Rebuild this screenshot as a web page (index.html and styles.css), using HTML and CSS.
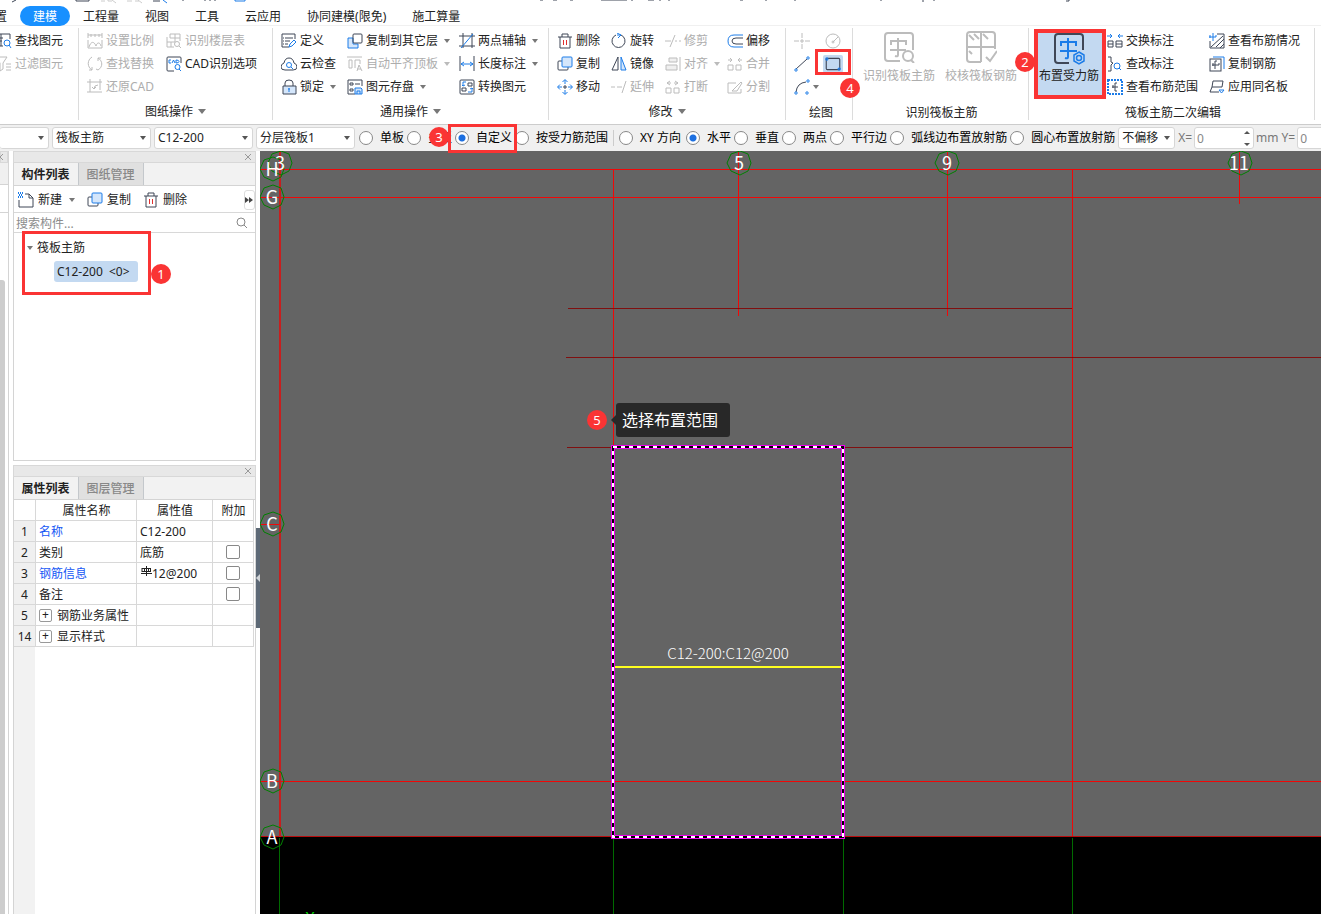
FILE: index.html
```html
<!DOCTYPE html>
<html lang="zh-CN">
<head>
<meta charset="utf-8">
<title>建模</title>
<link rel="stylesheet" href="styles.css">
</head>
<body>
<svg class="defs" aria-hidden="true">
  <symbol id="find" viewBox="0 0 16 16"><path d="M1 5V1h13v5M1 5h6M1 8h5M1 13h6M1 8v5M5 1v12"/><g class="a"><circle cx="11" cy="10" r="3"/><path d="M13 12l2 3"/></g></symbol>
  <symbol id="filter" viewBox="0 0 16 16"><path d="M0 1h11L7 7v6l-3 2V7zM10 8h5M10 11h5M10 14h5"/></symbol>
  <symbol id="scale" viewBox="0 0 16 16"><path d="M1 0v5M15 0v5M1 2h14M4 1v3M8 1v3M12 1v3M1 7v8h14V7M2 14c2-6 5-6 7-1 1-4 4-4 5 0"/></symbol>
  <symbol id="floor" viewBox="0 0 16 16"><path d="M4 1h10v7M1 4v10h7M4 1v4h5v4M1 9h8M9 1v4h5M5 9v5"/><circle cx="11" cy="11" r="2.5"/><path d="M13 13l2 2"/></symbol>
  <symbol id="replace" viewBox="0 0 16 16"><path d="M5 1C0 4 0 11 5 14M5 14v-3M5 14H2M11 14c5-3 5-9 0-12M11 2v3M11 2h3M9 13l2 1"/></symbol>
  <symbol id="cad" viewBox="0 0 16 16"><path d="M8 15H2q-1 0-1-1V2q0-1 1-1h12q1 0 1 1v5"/><g class="a"><path d="M5 4H3v3h2M6 7l1.500-3L9 7M10 4v3q3 0 3-1.500T10 4"/><circle cx="11.500" cy="11" r="2.500"/><path d="M13 13l2 2"/></g></symbol>
  <symbol id="restore" viewBox="0 0 16 16"><path d="M0 3h15M3 0v13h12M13 3v8M0 13h3M13 0v3M11 6q-4 0-4 4M5 8l2 2 2-2"/></symbol>
  <symbol id="define" viewBox="0 0 16 16"><path d="M8 14H1V1h13v5M4 5h8M4 8h5M4 11h3M2 5h1M2 8h1M2 11h1"/><path class="a" d="M8 14l1-3 4-4 2 2-4 4z"/></symbol>
  <symbol id="cloud" viewBox="0 0 16 16"><path d="M4 14q-4 0-4-3t3-4q1-5 5-5t5 5q3 1 3 4t-4 3z"/><g class="a"><circle cx="8" cy="9" r="2.500"/><path d="M10 11l2 2"/></g></symbol>
  <symbol id="lock" viewBox="0 0 16 16"><path d="M4 7V4q0-3 4-3t4 3v3"/><path class="f" d="M2 7h13v8H2z"/><path class="a" d="M8 9v4M7 10h2"/></symbol>
  <symbol id="copy" viewBox="0 0 16 16"><path d="M5 5H2q-1 0-1 1v7q0 1 1 1h8q1 0 1-1v-2"/><rect class="a f" x="5" y="1" width="10" height="10" rx="1"/></symbol>
  <symbol id="copyto" viewBox="0 0 16 16"><path class="a f" d="M1 5h5v6h5v4H1z"/><rect x="6" y="1" width="9" height="9" rx="1"/></symbol>
  <symbol id="align" viewBox="0 0 16 16"><path d="M0 1h15M2 4h3v8H2zM8 12V4h5v4M10 15l2-6 3 6M10 13h4"/></symbol>
  <symbol id="save" viewBox="0 0 16 16"><path d="M8 15H1V1h14v6M3 4h3v2H3zM8 5h5M3 10h3v2H3z"/><path class="a f" d="M8 9h6l1 1v5H8zM10 15v-3h3v3"/></symbol>
  <symbol id="axis" viewBox="0 0 16 16"><path d="M4 0v15M13 0v15M0 3h16M0 13h16"/><path class="a" d="M2 15L14 1"/></symbol>
  <symbol id="length" viewBox="0 0 16 16"><path d="M1 0v15M15 0v15"/><path class="a" d="M2 8h12M5 6L2 8l3 2M11 6l3 2-3 2"/></symbol>
  <symbol id="convert" viewBox="0 0 16 16"><rect x="1" y="1" width="14" height="14" rx="1"/><path d="M9 4h4v3H9zM3 9h4v3H3z"/><path class="a" d="M7 3H4v4M3 6l1 1 2-1M9 13h4V9M11 10l2-1 1 1"/></symbol>
  <symbol id="trash" viewBox="0 0 16 16"><path d="M1 4h14M5 4V1h6v3M3 4v11h10V4"/><path class="r" d="M6.500 7v5M9.500 7v5"/></symbol>
  <symbol id="rotate" viewBox="0 0 16 16"><path d="M10 2a6.500 6.500 0 1 1-5 0"/><path class="a" d="M6 0l4 2-3 3M10 2H6"/></symbol>
  <symbol id="mirror" viewBox="0 0 16 16"><path d="M7 1v13H1z"/><path class="a f" d="M10 1v13h5z"/></symbol>
  <symbol id="move" viewBox="0 0 16 16"><g class="a"><path d="M5.500 3L8 0.500 10.500 3M5.500 13L8 15.500 10.500 13M3 5.500L0.500 8 3 10.500M13 5.500L15.500 8 13 10.500M1 8h4M11 8h4M8 1v4M8 11v4"/></g><path d="M6 8h4M8 6v4"/></symbol>
  <symbol id="trim" viewBox="0 0 16 16"><path d="M0 8h6M10 2L5 14M10 8h2M14 8h2"/></symbol>
  <symbol id="extend" viewBox="0 0 16 16"><path d="M0 8h4M6 8h5M15 2l-4 12"/></symbol>
  <symbol id="alignr" viewBox="0 0 16 16"><path d="M15 1v14"/><path class="f" d="M4 2h8v4H4zM1 9h11v5H1z"/></symbol>
  <symbol id="break" viewBox="0 0 16 16"><path d="M1 9h5v5H1zM9 9h5v5H9zM5 2L2 4l3 2M2 4h4M10 2l3 2-3 2M13 4H9"/></symbol>
  <symbol id="offset" viewBox="0 0 16 16"><path class="a" d="M16 2H7q-6 0-6 6t6 6h9"/><path d="M16 5H9q-4 0-4 3t4 3h7"/></symbol>
  <symbol id="merge" viewBox="0 0 16 16"><path d="M1 9h5v5H1zM9 9h5v5H9zM1 4h4M3 2l2 2-2 2M15 4h-4M13 2l-2 2 2 2"/></symbol>
  <symbol id="split" viewBox="0 0 16 16"><path d="M9 4H1v10h13v-4M5 12l9-9 1 1-5 8z"/></symbol>
  <symbol id="point" viewBox="0 0 16 16"><path d="M0 8h5M11 8h5M8 0v5M8 11v5M7 7h2v2H7z"/></symbol>
  <symbol id="circle" viewBox="0 0 16 16"><circle cx="8" cy="8" r="7"/><path d="M8 9l5-5"/><circle cx="8" cy="9" r="1"/></symbol>
  <symbol id="line" viewBox="0 0 16 16"><path d="M2 13L13 3"/><g class="a"><circle cx="2" cy="14" r="1.200"/><circle cx="14" cy="2" r="1.200"/></g></symbol>
  <symbol id="rect" viewBox="0 0 16 16"><rect x="2" y="3" width="12" height="10" rx="1"/><g class="a"><circle cx="2.500" cy="3.500" r="1"/><circle cx="13.500" cy="12.500" r="1"/></g></symbol>
  <symbol id="arc" viewBox="0 0 16 16"><path d="M2 13Q3 4 12 3"/><g class="a"><circle cx="2" cy="14" r="1.200"/><circle cx="14" cy="2" r="1.200"/><circle cx="13" cy="14" r="1.200"/></g></symbol>
  <symbol id="swap" viewBox="0 0 16 16"><path d="M1 8h5v6H1zM9 8h6v6H9zM1 11h5M9 11h6"/><path class="a" d="M0 3h5M3 1l2 2-2 2M16 3h-5M13 1l-2 2 2 2"/></symbol>
  <symbol id="edit" viewBox="0 0 16 16"><path d="M1 1h3v5l2 1-2 2v6H1"/><g class="a"><circle cx="10" cy="10" r="3"/><path d="M12 12l2 2"/></g></symbol>
  <symbol id="range" viewBox="0 0 16 16"><rect class="a" x="1" y="1" width="14" height="14" stroke-width="2" stroke-dasharray="2 1"/><path d="M10 4H8v8h2M5 8h6M6 6v3"/></symbol>
  <symbol id="status" viewBox="0 0 16 16"><path d="M8 1h7v14H1V8M2 14L14 3M7 14l8-8M11 15l4-4"/><path class="a" d="M4 0v8M0 4h7V2M1 2v3"/></symbol>
  <symbol id="copybar" viewBox="0 0 16 16"><path class="a" d="M4 1h11v12"/><rect x="1" y="3" width="11" height="12"/><path d="M8 5H6v8M3 9h7V7M4 7v3"/></symbol>
  <symbol id="apply" viewBox="0 0 16 16"><path d="M4 2h10l-1 6H3zM3 8l-2 5h9"/><path class="a" d="M10 11h5l-2.500 3z"/></symbol>
  <symbol id="new" viewBox="0 0 16 16"><path d="M7 2h4l4 4v9H1V8M11 2v4h4"/><path class="a" d="M0 1h5M1 3h4M0 5h5" stroke-dasharray="1 1" stroke-width="2"/></symbol>
  <symbol id="bigfind" viewBox="0 0 32 32"><path d="M17 30H5q-3 0-3-3V5q0-3 3-3h22q3 0 3 3v14M15 7v17q0 2-3 1M8 14v-4h15v4M7 19h16"/><circle cx="25" cy="25" r="5"/><path d="M28 29l3 3"/></symbol>
  <symbol id="bigcheck" viewBox="0 0 32 32"><path d="M16 31H5q-3 0-3-3V4q0-3 3-3h22q3 0 3 3v14M16 1v30M2 16h28M4 4l5 5M9 3l5 5M18 3l5 5M4 20l3 3M21 26l4 4 7-10"/></symbol>
  <symbol id="bigbar" viewBox="0 0 32 32"><path d="M16 30H5q-3 0-3-3V4q0-3 3-3h22q3 0 3 3v13"/><g class="a"><path d="M15 5v19q0 2-3 1M8 13V9h15v4M7 18h17"/><g stroke-width="1.500"><path d="M26 19l5 3v6l-5 3-5-3v-6z"/><circle cx="26" cy="25" r="2.500"/></g></g></symbol>
</svg>

<header class="top">
  <svg class="titlebar" aria-hidden="true"><path d="M12 2l4-2M76 0v1h13V0M183 0v1" /><path class="dim" d="M101 1h4M108 0v1h4M112 0l4 3M127 1h5M135 1h4M138 0l4 3"/><path d="M153 1h7M205 0v1M210 0v1M215 0v1"/><path class="a" d="M163 0l4 3M235 0v1h10V0"/><path d="M540 0h3M553 0h4M570 0h3M601 0h26M632 0v1M648 0h6M660 0v1M669 0v1M740 0h3M766 0v1M795 0v1M880 0h2M923 0v2M934 0v1M1066 1h3V0"/></svg>
  <nav class="menu">
    <button>置</button><button class="on">建模</button><button>工程量</button><button>视图</button><button>工具</button><button>云应用</button><button>协同建模(限免)</button><button>施工算量</button>
  </nav>
</header>

<section class="ribbon">
  <div class="group g0">
    <div class="cmds">
      <button class="cmd"><svg><use href="#find"/></svg>查找图元</button>
      <button class="cmd off"><svg><use href="#filter"/></svg>过滤图元</button>
    </div>
  </div>
  <div class="group g1">
    <div class="cmds">
      <button class="cmd off"><svg><use href="#scale"/></svg>设置比例</button>
      <button class="cmd off"><svg><use href="#floor"/></svg>识别楼层表</button>
      <button class="cmd off"><svg><use href="#replace"/></svg>查找替换</button>
      <button class="cmd"><svg><use href="#cad"/></svg>CAD识别选项</button>
      <button class="cmd off"><svg><use href="#restore"/></svg>还原CAD</button>
    </div>
    <div class="caption">图纸操作<i class="tri"></i></div>
  </div>
  <div class="group g2">
    <div class="cmds">
      <button class="cmd"><svg><use href="#define"/></svg>定义</button>
      <button class="cmd"><svg><use href="#copyto"/></svg>复制到其它层<i class="tri"></i></button>
      <button class="cmd"><svg><use href="#axis"/></svg>两点辅轴<i class="tri"></i></button>
      <button class="cmd"><svg><use href="#cloud"/></svg>云检查</button>
      <button class="cmd off"><svg><use href="#align"/></svg>自动平齐顶板<i class="tri"></i></button>
      <button class="cmd"><svg><use href="#length"/></svg>长度标注<i class="tri"></i></button>
      <button class="cmd"><svg><use href="#lock"/></svg>锁定<i class="tri"></i></button>
      <button class="cmd"><svg><use href="#save"/></svg>图元存盘<i class="tri"></i></button>
      <button class="cmd"><svg><use href="#convert"/></svg>转换图元</button>
    </div>
    <div class="caption">通用操作<i class="tri"></i></div>
  </div>
  <div class="group g3">
    <div class="cmds">
      <button class="cmd"><svg><use href="#trash"/></svg>删除</button>
      <button class="cmd"><svg><use href="#rotate"/></svg>旋转</button>
      <button class="cmd off"><svg><use href="#trim"/></svg>修剪</button>
      <button class="cmd"><svg><use href="#offset"/></svg>偏移</button>
      <button class="cmd"><svg><use href="#copy"/></svg>复制</button>
      <button class="cmd"><svg><use href="#mirror"/></svg>镜像</button>
      <button class="cmd off"><svg><use href="#alignr"/></svg>对齐<i class="tri"></i></button>
      <button class="cmd off"><svg><use href="#merge"/></svg>合并</button>
      <button class="cmd"><svg><use href="#move"/></svg>移动</button>
      <button class="cmd off"><svg><use href="#extend"/></svg>延伸</button>
      <button class="cmd off"><svg><use href="#break"/></svg>打断</button>
      <button class="cmd off"><svg><use href="#split"/></svg>分割</button>
    </div>
    <div class="caption">修改<i class="tri"></i></div>
  </div>
  <div class="group g4">
    <div class="cmds">
      <button class="cmd off" aria-label="点"><svg><use href="#point"/></svg></button>
      <button class="cmd off" aria-label="圆"><svg><use href="#circle"/></svg></button>
      <button class="cmd" aria-label="直线"><svg><use href="#line"/></svg></button>
      <button class="cmd picked" aria-label="矩形"><svg><use href="#rect"/></svg><b class="badge b4">4</b></button>
      <button class="cmd" aria-label="弧"><svg><use href="#arc"/></svg><i class="tri"></i></button>
    </div>
    <div class="caption low">绘图</div>
  </div>
  <div class="group g5">
    <div class="bigs">
      <button class="big off"><svg><use href="#bigfind"/></svg>识别筏板主筋</button>
      <button class="big off"><svg><use href="#bigcheck"/></svg>校核筏板钢筋</button>
    </div>
    <div class="caption low">识别筏板主筋</div>
  </div>
  <div class="group g6">
    <div class="mixed">
      <button class="big active"><svg><use href="#bigbar"/></svg>布置受力筋<b class="badge b2">2</b></button>
      <div class="cmds">
        <button class="cmd"><svg><use href="#swap"/></svg>交换标注</button>
        <button class="cmd"><svg><use href="#status"/></svg>查看布筋情况</button>
        <button class="cmd"><svg><use href="#edit"/></svg>查改标注</button>
        <button class="cmd"><svg><use href="#copybar"/></svg>复制钢筋</button>
        <button class="cmd"><svg><use href="#range"/></svg>查看布筋范围</button>
        <button class="cmd"><svg><use href="#apply"/></svg>应用同名板</button>
      </div>
    </div>
    <div class="caption low">筏板主筋二次编辑</div>
  </div>
</section>

<form class="options">
  <span class="drop first"><select aria-label="楼层"><option></option></select></span>
  <span class="drop"><select aria-label="构件类型"><option>筏板主筋</option></select></span>
  <span class="drop"><select aria-label="构件"><option>C12-200</option></select></span>
  <span class="drop"><select aria-label="分层"><option>分层筏板1</option></select></span>
  <div class="radios">
    <label><input type="radio" name="area">单板</label>
    <label><input type="radio" name="area">多板</label>
    <label class="marked"><input type="radio" name="area" checked>自定义<b class="badge b3">3</b></label>
    <label><input type="radio" name="area">按受力筋范围</label>
  </div>
  <div class="radios dirs">
    <label><input type="radio" name="dir">XY 方向</label>
    <label><input type="radio" name="dir" checked>水平</label>
    <label><input type="radio" name="dir">垂直</label>
    <label><input type="radio" name="dir">两点</label>
    <label><input type="radio" name="dir">平行边</label>
    <label><input type="radio" name="dir">弧线边布置放射筋</label>
    <label><input type="radio" name="dir">圆心布置放射筋</label>
  </div>
  <span class="drop shift"><select aria-label="偏移"><option>不偏移</option></select></span>
  <label class="num" for="ox">X=</label><span class="spin"><input id="ox" value="0"></span><span class="num">mm</span>
  <label class="num" for="oy">Y=</label><span class="spin"><input id="oy" value="0"></span>
</form>

<main class="work">
  <aside class="edge"><div class="bar"><button class="x" aria-label="关闭"><svg viewBox="0 0 8 8"><path d="M1 1l6 6M7 1L1 7"/></svg></button></div><div class="e1"></div><div class="e2"></div><div class="track"><div class="thumb"></div></div></aside>
  <aside class="side">
    <section class="panel">
      <div class="bar"><button class="x" aria-label="关闭"><svg viewBox="0 0 8 8"><path d="M1 1l6 6M7 1L1 7"/></svg></button></div>
      <div class="tabs"><button class="on">构件列表</button><button>图纸管理</button></div>
      <div class="tools">
        <button class="cmd"><svg><use href="#new"/></svg>新建<i class="tri"></i></button>
        <button class="cmd"><svg><use href="#copy"/></svg>复制</button>
        <button class="cmd"><svg><use href="#trash"/></svg>删除</button>
        <button class="more" aria-label="更多"><svg viewBox="0 0 8 6"><path d="M0 0l4 3-4 3zM4 0l4 3-4 3z"/></svg></button>
      </div>
      <div class="search"><input placeholder="搜索构件..." aria-label="搜索构件"><svg viewBox="0 0 12 12"><circle cx="5" cy="5" r="4"/><path d="M8 8l3 3"/></svg></div>
      <div class="tree">
        <div class="node"><i class="tri"></i>筏板主筋</div>
        <button class="leaf">C12-200&nbsp; &lt;0&gt;</button>
        <span class="mark"></span><b class="badge b1">1</b>
      </div>
    </section>
    <section class="panel">
      <div class="bar"><button class="x" aria-label="关闭"><svg viewBox="0 0 8 8"><path d="M1 1l6 6M7 1L1 7"/></svg></button></div>
      <div class="tabs"><button class="on">属性列表</button><button>图层管理</button></div>
      <div class="props">
        <table>
          <colgroup><col class="c0"><col class="c1"><col class="c2"><col class="c3"></colgroup>
          <thead><tr><th></th><th>属性名称</th><th>属性值</th><th>附加</th></tr></thead>
          <tbody>
            <tr><th>1</th><td class="link">名称</td><td>C12-200</td><td></td></tr>
            <tr><th>2</th><td>类别</td><td>底筋</td><td><input type="checkbox" aria-label="附加类别"></td></tr>
            <tr><th>3</th><td class="link">钢筋信息</td><td><svg class="rebar" viewBox="0 0 12 11"><path d="M6.500 0v10M2 2.500h9M2 2v4M10.500 2v4M2 5.500h9M1 7.500h11M4.500 2v4M8.500 2v4"/></svg>12@200</td><td><input type="checkbox" aria-label="附加钢筋信息"></td></tr>
            <tr><th>4</th><td>备注</td><td></td><td><input type="checkbox" aria-label="附加备注"></td></tr>
            <tr><th>5</th><td><button class="plus">+</button>钢筋业务属性</td><td></td><td></td></tr>
            <tr><th>14</th><td><button class="plus">+</button>显示样式</td><td></td><td></td></tr>
          </tbody>
        </table>
      </div>
    </section>
  </aside>
  <div class="split"><button aria-label="收起"><svg viewBox="0 0 4 8"><path d="M4 0v8L0 4z"/></svg></button></div>
  <section class="canvas">
    <svg class="drawing" viewBox="260 151 1061 763" preserveAspectRatio="xMinYMin slice">
      <rect class="ground" x="260" y="837" width="4000" height="2000"/>
      <g class="axis"><path d="M260 169.500h4000M260 197.500h4000M260 524.500h20M260 781.500h4000M613.500 169v278M738.500 152v164M947.500 152v164M1072.500 169v668M1239.500 152v52"/></g>
      <path class="base" d="M260 836.500h4000"/>
      <path class="main" d="M280 151v686"/>
      <path class="dark" d="M568 308.500h504M566 357.500h4000M567 447.500h505"/>
      <path class="below" d="M279.500 838v2000M613.500 838v2000M843.500 838v2000M1072.500 838v2000"/>
      <g class="bubbles">
        <path id="oct" d="M284 163l-3 8-8 4-9-4-4-8 4-9 9-3 8 3z" transform="translate(8 0)"/>
        <use href="#oct" x="-8" y="6"/><use href="#oct" x="-8" y="34"/><use href="#oct" x="-8" y="361"/><use href="#oct" x="-8" y="618"/><use href="#oct" x="-8" y="674"/>
        <use href="#oct" x="459"/><use href="#oct" x="667"/><use href="#oct" x="960"/>
      </g>
      <g class="names"><text x="280" y="170">3</text><text x="272" y="176">H</text><text x="272" y="204">G</text><text x="272" y="531">C</text><text x="272" y="788">B</text><text x="272" y="844">A</text><text x="739" y="170">5</text><text x="947" y="170">9</text><text x="1239" y="170">11</text></g>
      <path class="bar-line" d="M615 667h227"/>
      <text class="bar-name" x="728" y="659">C12-200:C12@200</text>
      <rect class="sel" x="613" y="447" width="230" height="390"/>
      <rect class="sel-b" x="613" y="447" width="230" height="390"/>
      <rect class="sel-w" x="613" y="447" width="230" height="390"/>
      <text class="ucs" x="310" y="922">Y</text>
    </svg>
    <b class="badge b5">5</b>
    <div class="tip">选择布置范围</div>
  </section>
</main>
</body>
</html>
```
FILE: styles.css
```css
*, *::before, *::after { box-sizing: border-box; }
html, body { height: 100%; }
body {
  --ink: #3f4757; --accent: #1c7ce8; --fill: #d4e6fb; --red: #e03030;
  margin: 0; display: flex; flex-direction: column; overflow: hidden;
  background: #fff; color: #222;
  font: 12px/16px "Noto Sans", "Noto Sans CJK SC", sans-serif;
}
button, input, select { font: inherit; color: inherit; }
button { border: 0; padding: 0; background: none; white-space: nowrap; }
svg { display: block; flex: none; fill: none; stroke: var(--ink); }
.defs { position: absolute; width: 0; height: 0; }
.a { stroke: var(--accent); }
.f { fill: var(--fill); }
.r { stroke: var(--red); }
.off { color: #adadad; --ink: #bcbcbc; --accent: #bcbcbc; --fill: #f0f0f0; }
.tri { flex: none; width: 6px; height: 4px; border: 3px solid transparent; border-top: 4px solid #777; border-bottom: 0; }
.off .tri { border-top-color: #bbb; }

.titlebar { width: 100%; height: 6px; }
.titlebar .dim { stroke: #ccc; }
.menu { display: flex; height: 20px; margin-left: -18px; border-bottom: 1px solid #f0f0f0; }
.menu button { height: 20px; padding: 2px 13px 0; }
.menu .on { background: #1890ff; color: #fff; border-radius: 10px; }

.ribbon { display: flex; height: 98px; }
.group { position: relative; flex: none; padding-top: 1px; margin: 2px 0 4px; border-right: 1px solid #dcdcdc; }
.cmds { display: grid; grid-auto-rows: 23px; height: 69px; }
.cmd { display: flex; align-items: center; gap: 3px; }
.cmd svg { width: 16px; height: 16px; }
.cmd .tri { margin-left: 3px; }
.caption { display: flex; justify-content: center; align-items: center; gap: 5px; padding-top: 4px; height: 23px; margin-left: -8px; }
.caption .tri { width: 8px; height: 5px; border-width: 5px 4px 0; }
.caption.low { padding-top: 7px; }
.g0 { width: 79px; }
.g0 .cmds { margin-left: -4px; }
.g1 { width: 194px; padding-left: 8px; }
.g1 .cmds { grid-template-columns: 79px 1fr; }
.g2 { width: 276px; padding-left: 8px; }
.g2 .cmds { grid-template-columns: 66px 112px 1fr; }
.g3 { width: 237px; padding-left: 8px; }
.g3 .cmds { grid-template-columns: 54px 54px 62px 1fr; }
.g4 { width: 67px; padding-left: 8px; }
.g4 .cmds { grid-template-columns: 31px 1fr; }
.g4 .caption { margin-left: -4px; }
.g4 .cmd .tri { margin-left: 0; }
.picked::before { content: ""; position: absolute; z-index: 1; left: 29px; top: 21px; width: 36px; height: 26px; border: 3px solid #fa3434; }
.picked svg { width: 20px; height: 18px; margin-left: -2px; background: #c3d9f1; border-radius: 2px; }
.g5 { width: 176px; }
.g5 .caption { margin-left: 2px; }
.bigs { display: flex; justify-content: center; gap: 10px; height: 69px; padding-right: 1px; }
.big { display: flex; flex-direction: column; align-items: center; gap: 5px; padding-top: 2px; }
.big svg { width: 32px; height: 32px; stroke-width: 2; }
.g6 { width: 286px; padding-left: 5px; }
.g6 .caption { margin-left: -2px; }
.mixed { display: flex; height: 69px; }
.mixed .cmds { grid-template-columns: 102px 1fr; margin-left: 1px; }
.active { position: relative; width: 72px; height: 70px; background: #c3d9f1; border: 4px solid #fa3434; padding: 0 2px 0 0; gap: 3px; }

.badge { position: absolute; z-index: 3; width: 20px; height: 20px; border-radius: 50%; background: #fa3434; color: #fff; font: 13px/20px "Noto Sans", sans-serif; text-align: center; }
.b4 { left: 54px; top: 50px; }
.b2 { left: -23px; top: 19px; }
.b3 { left: -26px; top: -3px; }
.b1 { left: 137px; top: 31px; }
.b5 { left: 327px; top: 259px; }

.options { display: flex; flex: none; align-items: center; height: 27px; background: #f0f0f0; border-top: 1px solid #ccc; white-space: nowrap; }
.drop { position: relative; flex: none; width: 99px; height: 22px; margin-right: 3px; }
.drop select { appearance: none; width: 100%; height: 100%; padding: 0 3px; border: 1px solid #d6d6d6; border-radius: 3px; background: #fff; }
.drop::after { content: ""; position: absolute; right: 5px; top: 9px; border: 3px solid transparent; border-top: 4px solid #555; border-bottom: 0; }
.drop.first { width: 49px; }
.drop.first select { border-left: 0; }
.radios { display: flex; align-items: center; gap: 3px; padding: 0 5px 0 1px; color: #000; }
.radios label { position: relative; display: flex; align-items: center; gap: 7px; }
.radios input { appearance: none; width: 14px; height: 14px; margin: 0; border: 1px solid #888; border-radius: 50%; background: #fff; }
.radios input:checked { background: radial-gradient(circle, #1c6fe0 3px, #fff 4px); }
.dirs { border-left: 1px solid #ccc; padding: 0 3px 0 5px; }
.dirs label:first-child { min-width: 64px; }
.marked::before { content: ""; position: absolute; z-index: 2; left: -7px; top: -6px; width: 69px; height: 29px; border: 3px solid #fa3434; }
.drop.shift { width: 57px; }
.num { color: #777; padding: 0 2px 0 0; }
.num + .num { padding-left: 1px; }
.spin { position: relative; flex: none; width: 60px; height: 22px; margin-right: 2px; }
.spin input { width: 100%; height: 100%; padding: 0 2px; border: 1px solid #d6d6d6; border-radius: 3px; background: #fff; color: #888; }
.spin::before, .spin::after { content: ""; position: absolute; right: 4px; border: 3px solid transparent; }
.spin::before { top: 4px; border-top: 0; border-bottom-color: #555; }
.spin::after { bottom: 3px; border-bottom: 0; border-top-color: #555; }

.work { display: flex; flex: 1; min-height: 0; }
.edge { display: flex; flex-direction: column; width: 9px; border-right: 1px solid #d4d4d4; overflow: hidden; }
.bar { display: flex; justify-content: flex-end; align-items: center; flex: none; height: 12px; padding-right: 3px; background: #e8e8e8; border: 1px solid #d8d8d8; }
.x svg { width: 8px; height: 8px; stroke: #999; }
.e1 { height: 22px; background: #f0f0f0; border-bottom: 1px solid #d4d4d4; }
.e2 { height: 28px; border-bottom: 1px solid #d4d4d4; }
.track { flex: 1; padding-top: 67px; }
.thumb { width: 5px; height: 100%; background: #cdcdcd; border-radius: 0 3px 0 0; }
.side { display: grid; grid-template-rows: 310fr 449fr; gap: 4px; flex: none; width: 243px; margin-left: 4px; }
.panel { display: flex; flex-direction: column; min-height: 0; border: 1px solid #d4d4d4; border-top: 0; }
.panel .bar { margin: 0 -1px; }
.panel + .panel { border-bottom: 0; }
.tabs { display: flex; flex: none; height: 23px; background: #f2f2f2; border-bottom: 1px solid #d4d4d4; }
.tabs button { width: 65px; height: 22px; padding: 2px 1px 0 0; border-right: 1px solid #c4c8cc; background: #e0e0e0; color: #888; font-weight: 500; }
.tabs .on { background: #f2f2f2; color: #222; font-weight: 700; }
.tools { display: flex; align-items: center; gap: 12px; flex: none; height: 27px; padding: 2px 0 0 4px; border-bottom: 1px solid #d8d8d8; }
.tools .cmd { gap: 4px; }
.more { width: 11px; height: 20px; margin-left: auto; border: 1px solid #ddd; border-radius: 3px; }
.more svg { width: 8px; height: 6px; fill: #444; stroke: none; }
.search { display: flex; align-items: center; flex: none; height: 20px; padding-right: 7px; border-bottom: 1px solid #d8d8d8; }
.search input { flex: 1; min-width: 0; padding: 1px 2px 0; border: 0; outline: 0; height: 18px; }
.search input::placeholder { color: #8c8c8c; }
.search svg { width: 12px; height: 12px; stroke: #888; }
.tree { position: relative; flex: 1; padding: 6px 13px; }
.node { display: flex; align-items: center; gap: 4px; height: 18px; }
.leaf { height: 21px; margin: 4px 0 0 27px; padding: 0 8px 0 3px; background: #c3d9f1; border-radius: 3px; }
.mark { position: absolute; left: 8px; top: -2px; width: 129px; height: 64px; border: 3px solid #fa3434; }

.props { flex: 1; background: linear-gradient(90deg, #f2f2f2 21px, #fff 21px); }
table { width: 240px; table-layout: fixed; border-collapse: separate; border-spacing: 0; background: #fff; }
.c0 { width: 22px; } .c1 { width: 101px; } .c2 { width: 76px; } .c3 { width: 41px; }
th, td { height: 21px; padding: 2px 2px 0 3px; border: 1px solid #d8d8d8; border-width: 0 1px 1px 0; font-weight: 400; text-align: left; line-height: 16px; white-space: nowrap; }
thead th { text-align: center; }
tbody th { background: #f0f0f0; padding: 2px 0 0; text-align: center; }
td:last-child { padding: 0; text-align: center; }
.link { color: #1557f5; }
td input { appearance: none; display: block; width: 14px; height: 14px; margin: 0 auto; border: 1px solid #888; border-radius: 2px; background: #fff; }
.rebar { display: inline-block; width: 12px; height: 11px; stroke: #222; vertical-align: 1px; }
.plus { width: 13px; height: 13px; margin: 0 5px 0 0; border: 1px solid #999; border-radius: 2px; line-height: 10px; vertical-align: 1px; }

.split { display: flex; align-items: center; width: 4px; padding-top: 91px; }
.split button { width: 4px; height: 100px; background: #5d6976; }
.split svg { width: 4px; height: 8px; fill: #d0d4d8; stroke: none; }

.canvas { position: relative; flex: 1; min-width: 0; overflow: hidden; background: #646464; }
.drawing { width: 100%; height: 100%; }
.ground { fill: #000; stroke: none; }
.axis { stroke: #f00808; }
.base { stroke: #b80c0c; }
.main { stroke: #c81e1e; stroke-width: 2; }
.dark { stroke: #801010; }
.below { stroke: #006a00; }
.bubbles { stroke: #008000; }
.names { fill: #fff; stroke: none; text-anchor: middle; font: 18px "Noto Sans CJK SC", sans-serif; }
.bar-line { stroke: #ffff20; stroke-width: 2; }
.bar-name { fill: #fff; stroke: none; text-anchor: middle; font: 300 15px "Noto Sans CJK SC", sans-serif; }
.sel { stroke: #f000f0; stroke-width: 4; }
.sel-b { stroke: #000; stroke-width: 2; }
.sel-w { stroke: #fff; stroke-width: 2; stroke-dasharray: 4 4; }
.ucs { fill: #00e000; stroke: none; text-anchor: middle; font: 15px "Noto Sans", sans-serif; }
.tip { position: absolute; left: 356px; top: 252px; padding: 0 12px 0 6px; border-radius: 3px; background: #282828; color: #fff; font-size: 16px; line-height: 34px; }
.tip::before { content: ""; position: absolute; left: -5px; top: 12px; border: 5px solid transparent; border-left: 0; border-right-color: #282828; }
```
